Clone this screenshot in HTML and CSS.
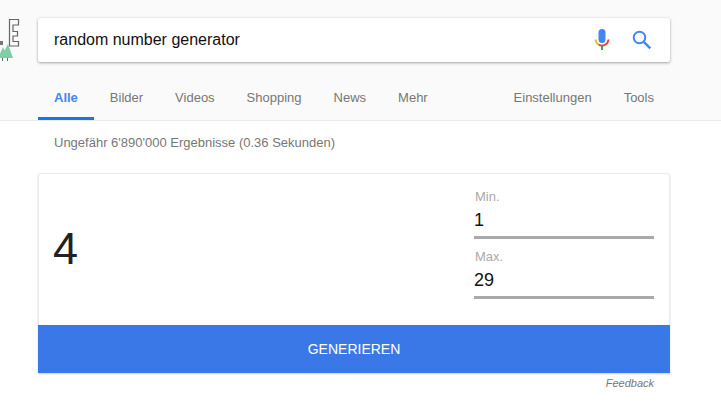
FILE: index.html
```html
<!DOCTYPE html>
<html lang="de">
<head>
  <meta charset="UTF-8" />
  <meta name="viewport" content="width=device-width, initial-scale=1.0" />
  <title>random number generator</title>
  <link rel="stylesheet" href="styles.css">
</head>
<body>

  <header class="top">
    <svg class="logo" width="22" height="64" viewBox="0 0 22 64">
      <path d="M9.500 19.500h9v5.500h-5.500v6.500h4.500v4.500h-4.500v5.500h5.500v4.500h-9z" fill="none" stroke="#666" stroke-width="1.200" />
      <rect x="0" y="41" width="3" height="4" fill="#777" />
      <path d="M-2 58l5-11 1.500 3.500 3.500-6.500 5 14z" fill="#7fcfa6" />
      <rect x="2" y="58" width="1" height="3" fill="#666" />
      <rect x="7" y="58" width="1" height="3" fill="#666" />
    </svg>

    <div class="search">
      <span class="query">random number generator</span>
      <svg class="mic" width="16" height="22" viewBox="0 0 16 22">
        <rect x="4.500" y="0" width="7" height="14" rx="3.500" fill="#4285f4" />
        <path d="M1.500 10.500a6.500 6.500 0 0 0 3 5" fill="none" stroke="#fbbc05" stroke-width="2" />
        <path d="M4.500 15.500a6.500 6.500 0 0 0 7 0 6.500 6.500 0 0 0 3-5" fill="none" stroke="#ea4335" stroke-width="2" />
        <rect x="7" y="17" width="2" height="4" fill="#34a853" />
      </svg>
      <svg class="lens" width="20" height="20" viewBox="0 0 20 20">
        <circle cx="7.500" cy="7.500" r="5.800" fill="none" stroke="#4285f4" stroke-width="2" />
        <path d="M11.800 11.800l6.500 6.500" fill="none" stroke="#4285f4" stroke-width="2.400" />
      </svg>
    </div>

    <nav class="tabs">
      <a class="tab active">Alle</a>
      <a class="tab">Bilder</a>
      <a class="tab">Videos</a>
      <a class="tab">Shopping</a>
      <a class="tab">News</a>
      <a class="tab">Mehr</a>
      <a class="tab push">Einstellungen</a>
      <a class="tab">Tools</a>
    </nav>
  </header>

  <main class="results">
    <p class="stats">Ungefähr 6'890'000 Ergebnisse (0.36 Sekunden)</p>

    <section class="card">
      <div class="card-body">
        <div class="number">4</div>
        <div class="range">
          <div class="field">
            <span class="field-label">Min.</span>
            <span class="field-value">1</span>
          </div>
          <div class="field">
            <span class="field-label">Max.</span>
            <span class="field-value">29</span>
          </div>
        </div>
      </div>
      <div class="generate">GENERIEREN</div>
    </section>

    <a class="feedback">Feedback</a>
  </main>

</body>
</html>
```

FILE: styles.css
```css
html, body {
  height: 100%;
}

body {
  margin: 0;
  background: #fff;
  font-family: 'Liberation Sans', Arial, sans-serif;
  color: #222;
  overflow: hidden;
}

.top {
  position: relative;
  height: 102px;
  padding-top: 18px;
  background: #fafafa;
  border-bottom: 1px solid #ebebeb;
}

.logo {
  position: absolute;
  left: 0;
  top: 0;
}

.search {
  display: flex;
  align-items: center;
  box-sizing: border-box;
  width: 632px;
  height: 44px;
  margin-left: 38px;
  padding: 0 18px 0 16px;
  background: #fff;
  border-radius: 2px;
  box-shadow: 0 1px 3px rgba(0, 0, 0, 0.35), 0 0 1px rgba(0, 0, 0, 0.15);
}

.query {
  flex: 1;
  font-size: 16px;
  color: #111;
}

.mic {
  margin-right: 22px;
}

.tabs {
  display: flex;
  margin: 12px 0 0 38px;
  width: 632px;
  height: 46px;
}

.tab {
  box-sizing: border-box;
  height: 46px;
  padding: 1px 16px 0;
  font-size: 13px;
  line-height: 46px;
  color: #777;
}

.tab.active {
  color: #4285f4;
  font-weight: bold;
  border-bottom: 3px solid #1a73e8;
}

.tab.push {
  margin-left: auto;
}

.results {
  padding: 0 51px 0 38px;
}

.stats {
  box-sizing: border-box;
  height: 52px;
  margin: 0;
  padding: 14px 0 0 16px;
  font-size: 13px;
  line-height: 15px;
  color: #777;
}

.card {
  box-sizing: border-box;
  width: 632px;
  height: 200px;
  background: #fff;
  border: 1px solid #ebebeb;
  border-bottom: 0;
  border-radius: 3px 3px 0 0;
  box-shadow: 0 1px 2px rgba(0, 0, 0, 0.2);
}

.card-body {
  display: flex;
  align-items: center;
  justify-content: space-between;
  box-sizing: border-box;
  height: 151px;
  padding: 0 15px 0 14px;
}

.number {
  padding-bottom: 2px;
  font-size: 45px;
  line-height: 52px;
  color: #222;
}

.range {
  align-self: flex-start;
  width: 180px;
  margin-top: 14px;
}

.field {
  display: flex;
  flex-direction: column;
  height: 60px;
  box-sizing: border-box;
  padding-top: 1px;
}

.field-label {
  padding-left: 1px;
  font-size: 13px;
  line-height: 15px;
  color: #aaa;
}

.field-value {
  box-sizing: border-box;
  height: 35px;
  padding-top: 6px;
  font-size: 18px;
  line-height: 21px;
  color: #111;
  border-bottom: 3px solid #a9a9a9;
}

.generate {
  height: 48px;
  margin: 0 -1px;
  background: #3b78e7;
  color: #fff;
  font-size: 14px;
  line-height: 48px;
  text-align: center;
}

.feedback {
  display: block;
  width: 616px;
  padding-top: 4px;
  font-size: 11px;
  line-height: 13px;
  font-style: italic;
  text-align: right;
  color: #777;
}
```
